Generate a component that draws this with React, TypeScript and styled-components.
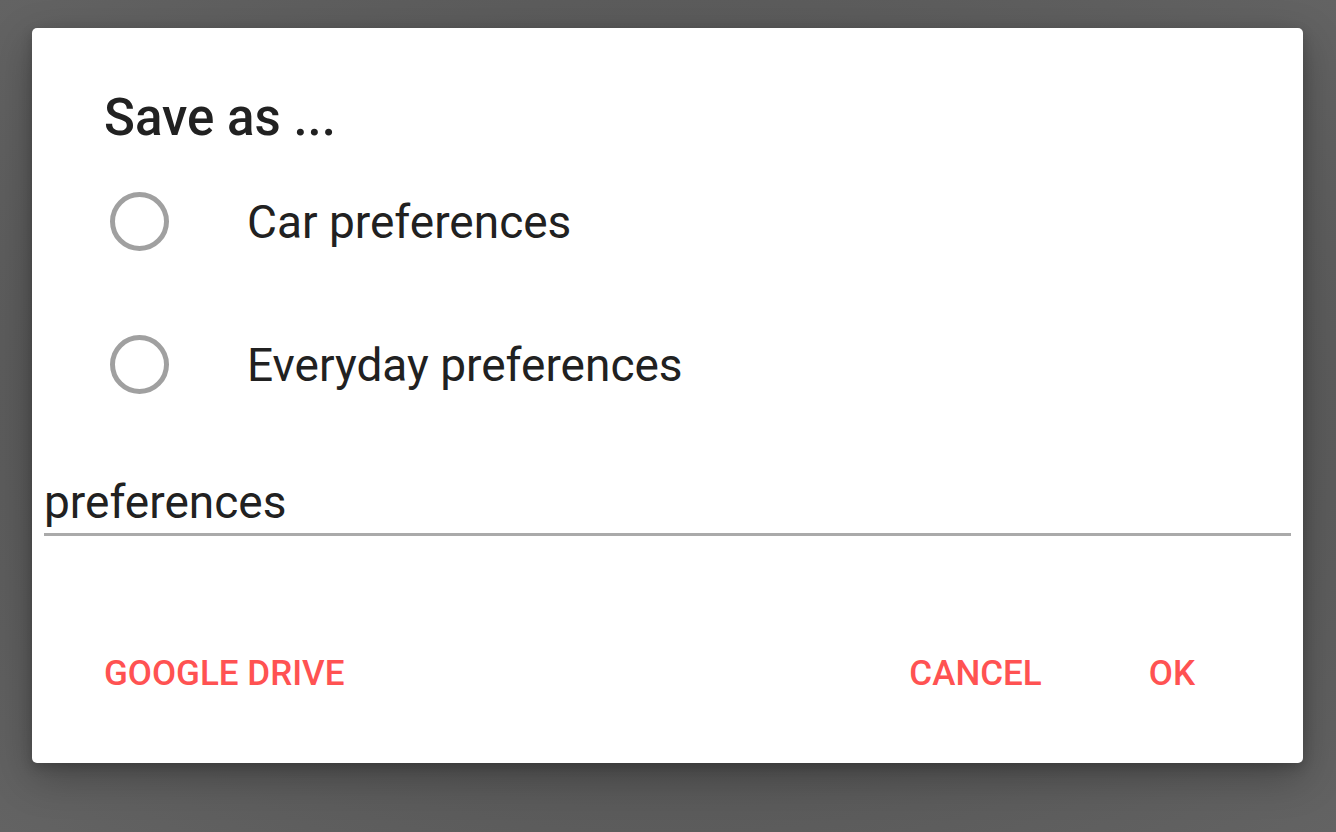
import React from "react";
import styled, { createGlobalStyle } from "styled-components";

const Global = createGlobalStyle`
  html, body { margin: 0; padding: 0; }
  body {
    width: 1336px;
    height: 832px;
    overflow: hidden;
    background: #616161;
    font-family: Roboto, "Noto Sans", "Liberation Sans", sans-serif;
  }
`;

const Page = styled.div`
  width: 1336px;
  height: 832px;
  box-sizing: border-box;
  padding: 28px 0 0 32px;
  background: radial-gradient(ellipse at 50% 50%, #515151 0%, #585858 55%, #636363 100%);
`;

const Dialog = styled.div`
  width: 1271px;
  height: 735px;
  box-sizing: border-box;
  background: #ffffff;
  border-radius: 5px;
  box-shadow: 0 14px 40px rgba(0, 0, 0, 0.28), 0 4px 12px rgba(0, 0, 0, 0.18);
  display: flex;
  flex-direction: column;
`;

const Title = styled.h1`
  margin: 61px 0 0 72px;
  font-size: 51px;
  line-height: 58px;
  font-weight: 500;
  color: #212121;
`;

const RadioGroup = styled.div`
  margin-top: 3px;
  padding-left: 78px;
  display: flex;
  flex-direction: column;
`;

const RadioRow = styled.label`
  height: 143px;
  display: flex;
  align-items: center;
  gap: 78px;
`;

const Circle = styled.span`
  width: 59px;
  height: 59px;
  box-sizing: border-box;
  border-radius: 50%;
  border: 5px solid #a0a0a0;
  flex: none;
`;

const RadioText = styled.span`
  font-size: 46px;
  line-height: 54px;
  padding-top: 1px;
  color: #212121;
`;

const Field = styled.div`
  margin: 39px 12px 0 12px;
  padding-bottom: 4px;
  border-bottom: 3px solid #aaaaaa;
  font-size: 46px;
  line-height: 54px;
  color: #212121;
`;

const ButtonBar = styled.div`
  margin-top: 118px;
  padding: 0 108px 0 72px;
  display: flex;
  align-items: center;
`;

const Spacer = styled.div`
  flex: 1;
`;

const FlatButton = styled.button<{ $ml?: number }>`
  margin-left: ${(p) => p.$ml ?? 0}px;
  padding: 0;
  border: none;
  background: transparent;
  font-family: inherit;
  font-size: 35px;
  line-height: 40px;
  font-weight: 500;
  color: #ff5252;
  text-transform: uppercase;
`;

const options = ["Car preferences", "Everyday preferences"];

export default function App() {
  return (
    <Page>
      <Global />
      <Dialog>
        <Title>Save as ...</Title>
        <RadioGroup>
          {options.map((o) => (
            <RadioRow key={o}>
              <Circle />
              <RadioText>{o}</RadioText>
            </RadioRow>
          ))}
        </RadioGroup>
        <Field>preferences</Field>
        <ButtonBar>
          <FlatButton>Google Drive</FlatButton>
          <Spacer />
          <FlatButton>Cancel</FlatButton>
          <FlatButton $ml={107}>OK</FlatButton>
        </ButtonBar>
      </Dialog>
    </Page>
  );
}
